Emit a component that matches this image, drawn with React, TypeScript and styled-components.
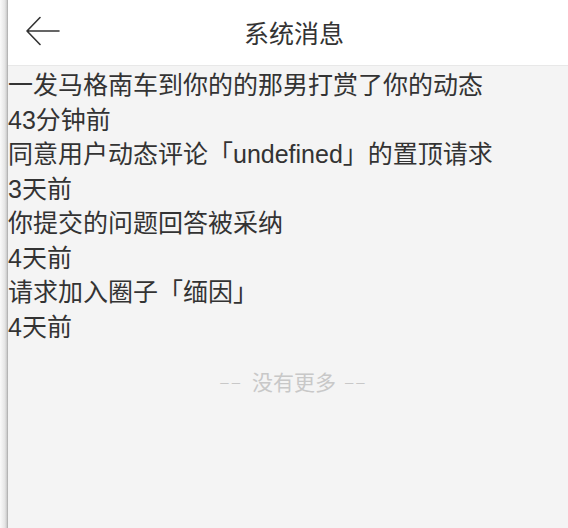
import React from "react";
import styled, { createGlobalStyle } from "styled-components";

const GlobalStyle = createGlobalStyle`
  html, body {
    margin: 0;
    padding: 0;
    background: #f4f4f4;
  }
  body {
    font-family: "Liberation Sans", "Noto Sans CJK SC", sans-serif;
  }
`;

const Screen = styled.div`
  display: flex;
  width: 568px;
  height: 528px;
  overflow: hidden;
`;

const EdgeShadow = styled.div`
  width: 8px;
  flex-shrink: 0;
  background: linear-gradient(to right, #fafafa 0%, #e6e6e6 60%, #d2d2d2 80%, #a8a8a8 100%);
`;

const Page = styled.div`
  flex: 1;
  display: flex;
  flex-direction: column;
  background: #f4f4f4;
`;

const Header = styled.div`
  height: 66px;
  display: grid;
  grid-template-columns: 90px 1fr 90px;
  align-items: center;
  background: #ffffff;
  border-bottom: 1px solid #e8e8e8;
  box-sizing: border-box;
`;

const BackButton = styled.div`
  display: flex;
  align-items: center;
  padding-left: 18px;
  padding-bottom: 3px;
  height: 100%;
  cursor: pointer;
`;

const Title = styled.div`
  text-align: center;
  font-size: 25px;
  color: #333333;
  padding-left: 12px;
  padding-bottom: 2px;
`;

const List = styled.div`
  display: flex;
  flex-direction: column;
  padding-top: 2px;
`;

const Line = styled.div`
  font-size: 25px;
  line-height: 34.5px;
  color: #333333;
  white-space: nowrap;
`;

const NoMore = styled.div`
  margin-top: 22px;
  display: flex;
  justify-content: center;
  align-items: center;
  gap: 9px;
  font-size: 21px;
  color: #c8c8c8;
  padding-left: 12px;
`;

const Dash = styled.span`
  letter-spacing: 3px;
  font-size: 15px;
`;

const messages = [
  { text: "一发马格南车到你的的那男打赏了你的动态", time: "43分钟前" },
  { text: "同意用户动态评论「undefined」的置顶请求", time: "3天前" },
  { text: "你提交的问题回答被采纳", time: "4天前" },
  { text: "请求加入圈子「缅因」", time: "4天前" },
];

const BackArrow = () => (
  <svg width="34" height="30" viewBox="0 0 34 30" fill="none">
    <path d="M1 15 H33 M14 1.5 L1 15 L14 28.5" stroke="#333" strokeWidth="1.6" strokeLinecap="round" strokeLinejoin="round" />
  </svg>
);

const App: React.FC = () => {
  return (
    <>
      <GlobalStyle />
      <Screen>
        <EdgeShadow />
        <Page>
          <Header>
            <BackButton>
              <BackArrow />
            </BackButton>
            <Title>系统消息</Title>
            <div />
          </Header>
          <List>
            {messages.map((m, i) => (
              <React.Fragment key={i}>
                <Line>{m.text}</Line>
                <Line>{m.time}</Line>
              </React.Fragment>
            ))}
          </List>
          <NoMore>
            <Dash>––</Dash>
            <span>没有更多</span>
            <Dash>––</Dash>
          </NoMore>
        </Page>
      </Screen>
    </>
  );
};

export default App;
